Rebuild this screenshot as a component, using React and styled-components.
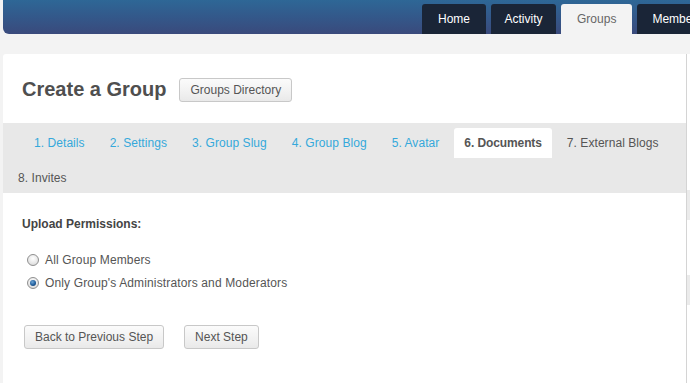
import React from "react";
import styled, { createGlobalStyle } from "styled-components";

const Global = createGlobalStyle`
  html, body { margin: 0; padding: 0; }
  body {
    background: #f3f3f3;
    font-family: "Liberation Sans", Arial, sans-serif;
    color: #555;
  }
`;

const Page = styled.div`
  width: 690px;
  height: 383px;
  overflow: hidden;
`;

const Header = styled.header`
  margin-left: 3px;
  width: 760px;
  height: 34px;
  border-bottom-left-radius: 6px;
  background: linear-gradient(to bottom, #2e6796 0%, #33588a 50%, #3a4a7c 100%);
  display: flex;
  align-items: flex-end;
  padding-left: 419px;
  box-sizing: border-box;
`;

const Nav = styled.nav`
  display: flex;
  gap: 5px;
  align-items: flex-end;
`;

const NavTab = styled.a`
  display: flex;
  align-items: center;
  justify-content: center;
  height: 30px;
  padding: 0 ${(p) => p.$pad}px;
  border-radius: 3px 3px 0 0;
  font-size: 12px;
  text-decoration: none;
  background: ${(p) => (p.$active ? "#f3f3f3" : "#1a2537")};
  color: ${(p) => (p.$active ? "#666" : "#fff")};
  white-space: nowrap;
`;

const Body = styled.div`
  display: flex;
  margin-top: 20px;
  margin-left: 3px;
`;

const Panel = styled.main`
  width: 684px;
  flex: none;
  min-height: 400px;
  background: #fff;
  border-right: 1px solid #d4d4d4;
  border-top-left-radius: 3px;
  box-sizing: border-box;
`;

const Sidebar = styled.aside`
  flex: none;
  width: 40px;
  display: flex;
  flex-direction: column;
  padding-top: 136px;
  gap: 55px;
  background: #fff;
`;

const SideBlock = styled.div`
  height: 30px;
  background: #ebebeb;
`;

const TitleRow = styled.div`
  display: flex;
  align-items: center;
  gap: 13px;
  padding: 24px 19px 21px;
`;

const Title = styled.h1`
  margin: 0;
  font-size: 20px;
  font-weight: bold;
  color: #4f4f4f;
  line-height: 22px;
  padding-bottom: 2px;
`;

const Button = styled.button`
  height: 24px;
  padding: 0 10px;
  border: 1px solid #c8c8c8;
  border-radius: 3px;
  background: linear-gradient(to bottom, #fbfbfb 0%, #f1f1f1 60%, #e9e9e9 100%);
  font-family: "Liberation Sans", Arial, sans-serif;
  font-size: 12px;
  color: #555;
  cursor: pointer;
`;

const Steps = styled.ul`
  list-style: none;
  margin: 0;
  padding: 5px 0 0 5px;
  background: #e8e8e8;
  display: flex;
  flex-wrap: wrap;
  row-gap: 5px;
`;

const Step = styled.li`
  height: 30px;
  display: flex;
  align-items: center;
  padding: 0 10px;
  margin-right: 5px;
  font-size: 12px;
  letter-spacing: ${(p) => (p.$active ? "-0.1px" : "0.06px")};
  white-space: nowrap;
  border-radius: 3px 3px 0 0;
  background: ${(p) => (p.$active ? "#fff" : "transparent")};
  font-weight: ${(p) => (p.$active ? "bold" : "normal")};
  color: ${(p) => (p.$active ? "#555" : p.$done ? "#35a8db" : "#555")};
  &:first-child {
    margin-left: 16px;
  }
`;

const Content = styled.section`
  padding: 23px 19px 40px;
`;

const Label = styled.div`
  font-size: 12px;
  font-weight: bold;
  color: #444;
  line-height: 16px;
  margin-bottom: 20px;
`;

const RadioList = styled.div`
  display: flex;
  flex-direction: column;
  gap: 7px;
  margin-bottom: 34px;
`;

const RadioRow = styled.label`
  display: flex;
  align-items: center;
  font-size: 12px;
  letter-spacing: 0.14px;
  color: #555;
  line-height: 16px;
`;

const Radio = styled.input`
  appearance: none;
  width: 12px;
  height: 12px;
  margin: 0 6px 0 5px;
  border-radius: 50%;
  border: 1px solid #8f8f8f;
  background: radial-gradient(circle at 50% 35%, #ffffff 0%, #e6e6e6 60%, #cfcfcf 100%);
  box-sizing: border-box;
  position: relative;
  &:checked::after {
    content: "";
    position: absolute;
    left: 2px;
    top: 2px;
    width: 6px;
    height: 6px;
    border-radius: 50%;
    background: radial-gradient(circle at 40% 35%, #6ea6d6 0%, #1f5d9c 55%, #0d2f5a 100%);
  }
`;

const Actions = styled.div`
  display: flex;
  gap: 20px;
  padding-left: 2px;
`;

const steps = [
  { t: "1. Details", done: true },
  { t: "2. Settings", done: true },
  { t: "3. Group Slug", done: true },
  { t: "4. Group Blog", done: true },
  { t: "5. Avatar", done: true },
  { t: "6. Documents", active: true },
  { t: "7. External Blogs" },
  { t: "8. Invites" },
];

export default function App() {
  return (
    <Page>
      <Global />
      <Header>
        <Nav>
          <NavTab $pad={16}>Home</NavTab>
          <NavTab $pad={13.5}>Activity</NavTab>
          <NavTab $pad={16} $active>Groups</NavTab>
          <NavTab $pad={15}>Members</NavTab>
        </Nav>
      </Header>
      <Body>
        <Panel>
          <TitleRow>
            <Title>Create a Group</Title>
            <Button>Groups Directory</Button>
          </TitleRow>
          <Steps>
            {steps.map((s) => (
              <Step key={s.t} $active={s.active} $done={s.done}>
                {s.t}
              </Step>
            ))}
          </Steps>
          <Content>
            <Label>Upload Permissions:</Label>
            <RadioList>
              <RadioRow>
                <Radio type="radio" name="perm" />
                All Group Members
              </RadioRow>
              <RadioRow>
                <Radio type="radio" name="perm" defaultChecked />
                Only Group's Administrators and Moderators
              </RadioRow>
            </RadioList>
            <Actions>
              <Button>Back to Previous Step</Button>
              <Button>Next Step</Button>
            </Actions>
          </Content>
        </Panel>
        <Sidebar>
          <SideBlock />
          <SideBlock />
        </Sidebar>
      </Body>
    </Page>
  );
}
